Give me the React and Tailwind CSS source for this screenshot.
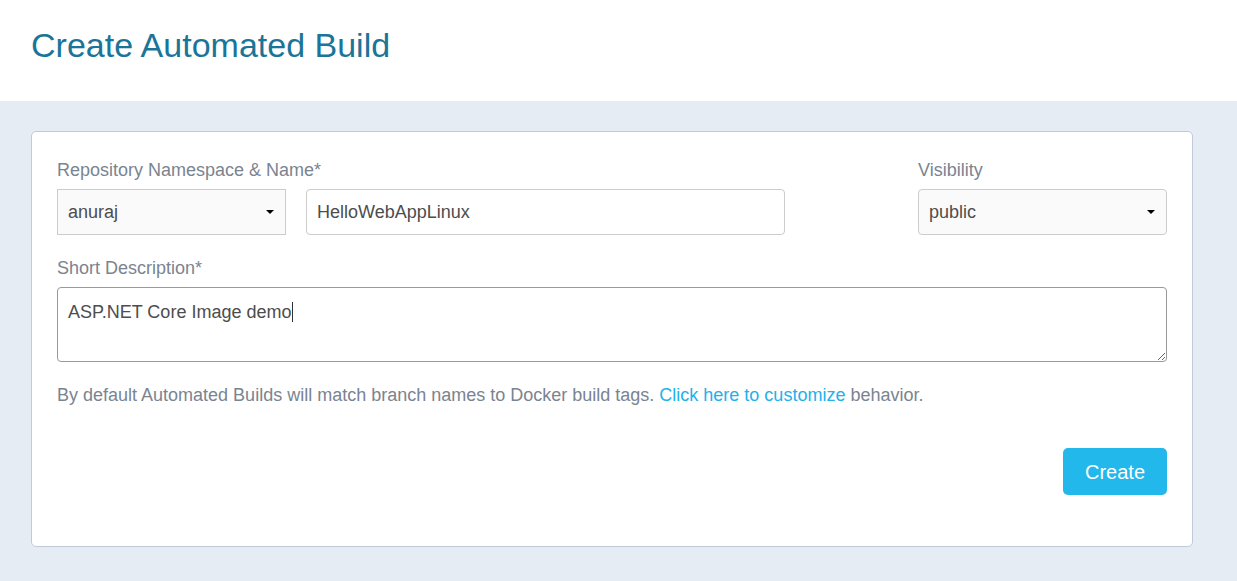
import { useState } from "react";

function Field({ id, label, children }) {
  return (
    <div className="flex min-w-0 flex-col gap-1.5">
      <label htmlFor={id} className="whitespace-nowrap leading-[26px]">
        {label}
      </label>
      {children}
    </div>
  );
}

function Select({ id, label, options, rounded }) {
  return (
    <div className="relative">
      <select
        id={id}
        aria-label={label}
        className={
          "block h-[46px] w-full appearance-none border border-[#cccccc] bg-[#fafafa] pr-8 pl-2.5 text-[#4d4d4d] outline-none " +
          (rounded ? "rounded" : "rounded-none")
        }
      >
        {options.map((option) => (
          <option key={option}>{option}</option>
        ))}
      </select>
      <svg
        aria-hidden="true"
        viewBox="0 0 8 4"
        className="pointer-events-none absolute top-[21px] right-3 h-1 w-2"
      >
        <path d="M0 0h8L4 4z" fill="#000" />
      </svg>
    </div>
  );
}

export default function App() {
  const [name, setName] = useState("HelloWebAppLinux");
  const [description, setDescription] = useState("ASP.NET Core Image demo");
  const [touched, setTouched] = useState(false);

  return (
    <div className="flex min-h-screen flex-col bg-[#e5ecf4] font-['Liberation_Sans',Arial,sans-serif] text-lg text-[#7a8491]">
      <header className="bg-white px-[31px] pt-6 pb-[35px]">
        <h1 className="text-[34px] leading-[42px] text-[#1a7598]">Create Automated Build</h1>
      </header>
      <main className="pt-[30px] pr-11 pb-[34px] pl-[31px]">
        <form
          onSubmit={(event) => event.preventDefault()}
          className="flex flex-col rounded-[5px] border border-[#c0c9d9] bg-white px-[25px] pt-[25px] pb-[51px]"
        >
          <div className="grid grid-cols-[728fr_249fr] gap-x-[133px]">
            <Field id="repo-name" label="Repository Namespace & Name*">
              <div className="grid grid-cols-[229fr_479fr] gap-5">
                <Select id="namespace" label="Repository namespace" options={["anuraj"]} />
                <input
                  id="repo-name"
                  type="text"
                  value={name}
                  onChange={(event) => setName(event.target.value)}
                  className="h-[46px] w-full min-w-0 rounded border border-[#cccccc] bg-white px-2.5 text-[#4d4d4d] outline-none"
                />
              </div>
            </Field>
            <Field id="visibility" label="Visibility">
              <Select id="visibility" options={["public", "private"]} rounded />
            </Field>
          </div>

          <div className="mt-5">
            <Field id="description" label="Short Description*">
              <div className="relative">
                <textarea
                  id="description"
                  value={description}
                  onFocus={() => setTouched(true)}
                  onChange={(event) => setDescription(event.target.value)}
                  className="block h-[75px] w-full rounded border border-[#999999] bg-white px-2.5 py-[11px] leading-[26px] text-[#4d4d4d] outline-none"
                />
                {/* Resting text cursor, replaced by the native one on focus */}
                {!touched && (
                  <span
                    aria-hidden="true"
                    className="pointer-events-none absolute top-[15px] left-[235px] h-5 w-px bg-[#333333]"
                  />
                )}
              </div>
            </Field>
          </div>

          <p className="mt-5 leading-[26px]">
            By default Automated Builds will match branch names to Docker build tags.{" "}
            <a href="#customize" className="text-[#22b1e8]">
              Click here to customize
            </a>{" "}
            behavior.
          </p>

          <button
            type="submit"
            className="mt-10 h-[47px] self-end rounded-[5px] bg-[#22b8eb] px-[22px] text-xl text-white"
          >
            Create
          </button>
        </form>
      </main>
    </div>
  );
}
